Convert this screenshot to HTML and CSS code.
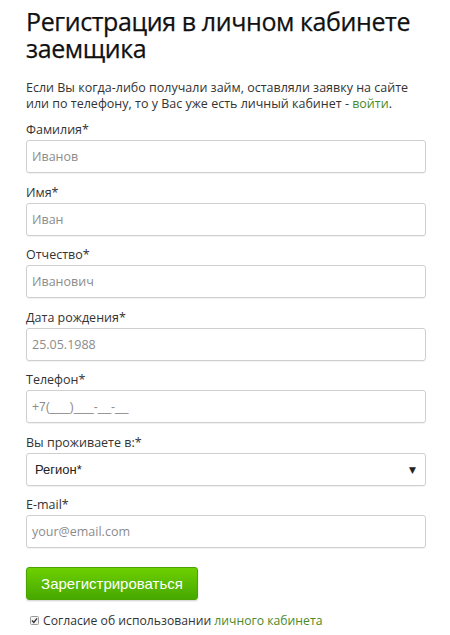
FILE: index.html
```html
<!DOCTYPE html>
<html lang="ru">
<head>
<meta charset="utf-8">
<title>Регистрация</title>
<link rel="stylesheet" href="styles.css">
</head>
<body>
<div class="page">
  <h1 class="title">Регистрация в личном кабинете заемщика</h1>
  <p class="intro">Если Вы когда-либо получали займ, оставляли заявку на сайте или по телефону, то у Вас уже есть личный кабинет - <a class="link" href="#">войти</a>.</p>
  <form class="form">
    <div class="field">
      <label class="label">Фамилия*</label>
      <div class="input"><span class="ph">Иванов</span></div>
    </div>
    <div class="field">
      <label class="label">Имя*</label>
      <div class="input"><span class="ph">Иван</span></div>
    </div>
    <div class="field">
      <label class="label">Отчество*</label>
      <div class="input"><span class="ph">Иванович</span></div>
    </div>
    <div class="field">
      <label class="label">Дата рождения*</label>
      <div class="input"><span class="ph">25.05.1988</span></div>
    </div>
    <div class="field">
      <label class="label">Телефон*</label>
      <div class="input"><span class="ph phone">+7(___)___-__-__</span></div>
    </div>
    <div class="field">
      <label class="label">Вы проживаете в:*</label>
      <div class="input select"><span class="sel-text">Регион*</span><span class="arrow">▼</span></div>
    </div>
    <div class="field">
      <label class="label">E-mail*</label>
      <div class="input"><span class="ph">your@email.com</span></div>
    </div>
    <button class="btn" type="button">Зарегистрироваться</button>
    <div class="agree">
      <span class="check"><svg width="9" height="9" viewBox="0 0 9 9"><rect x="0.5" y="0.5" width="8" height="8" rx="1" fill="#f4f4f4" stroke="#9a9a9a"/><path d="M2 4.6 L3.8 6.4 L7 2.4" fill="none" stroke="#333" stroke-width="1.4"/></svg></span>
      <span>Согласие об использовании <a class="link dashed" href="#">личного кабинета</a></span>
    </div>
  </form>
</div>
</body>
</html>
```
FILE: styles.css
```css
html, body {
  margin: 0;
  padding: 0;
  background: #fff;
}
.page {
  padding: 8px 0 0 26px;
  width: 400px;
  font-family: "Open Sans", "DejaVu Sans", sans-serif;
  color: #333;
}
.title {
  margin: 0;
  font-size: 25px;
  line-height: 27px;
  font-weight: 400;
  color: #111;
  letter-spacing: -0.4px;
  -webkit-text-stroke: 0.25px #111;
}
.intro {
  margin: 18px 0 0;
  font-size: 12.5px;
  line-height: 16px;
  color: #333;
}
.link {
  color: #4b8a2a;
  text-decoration: none;
}
.link.dashed {
  border-bottom: 1px dashed #4b8a2a;
}
.form {
  margin-top: 9px;
}
.field {
  display: flex;
  flex-direction: column;
  margin-bottom: 10.5px;
}
.label {
  font-size: 12.5px;
  line-height: 18px;
  color: #333;
  margin-bottom: 1px;
}
.input {
  box-sizing: border-box;
  height: 33px;
  border: 1px solid #cfcfcf;
  border-radius: 3px;
  display: flex;
  align-items: center;
  padding: 0 5px;
  box-shadow: 0 1px 1px rgba(0,0,0,0.06);
}
.ph {
  font-size: 12.5px;
  color: #8c8c8c;
}
.phone {
  font-family: "Liberation Sans", Arial, sans-serif;
  font-size: 12px;
}
.select {
  justify-content: space-between;
  padding: 0 8px;
}
.sel-text {
  font-family: "Liberation Sans", Arial, sans-serif;
  font-size: 13px;
  color: #222;
}
.arrow {
  font-size: 9px;
  color: #222;
  margin-right: 1px;
}
.btn {
  display: block;
  margin-top: 19px;
  width: 172px;
  height: 33px;
  border: 1px solid #4aa300;
  border-radius: 3px;
  background: linear-gradient(#6dd000, #47a800);
  color: #fff;
  font-family: "Liberation Sans", Arial, sans-serif;
  font-size: 15px;
  box-shadow: 0 1px 2px rgba(0,0,0,0.2);
  padding: 0;
}
.agree {
  display: flex;
  align-items: center;
  gap: 4px;
  margin-top: 12px;
  padding-left: 4px;
  font-size: 12.2px;
  color: #333;
}
.check {
  display: flex;
}
```
